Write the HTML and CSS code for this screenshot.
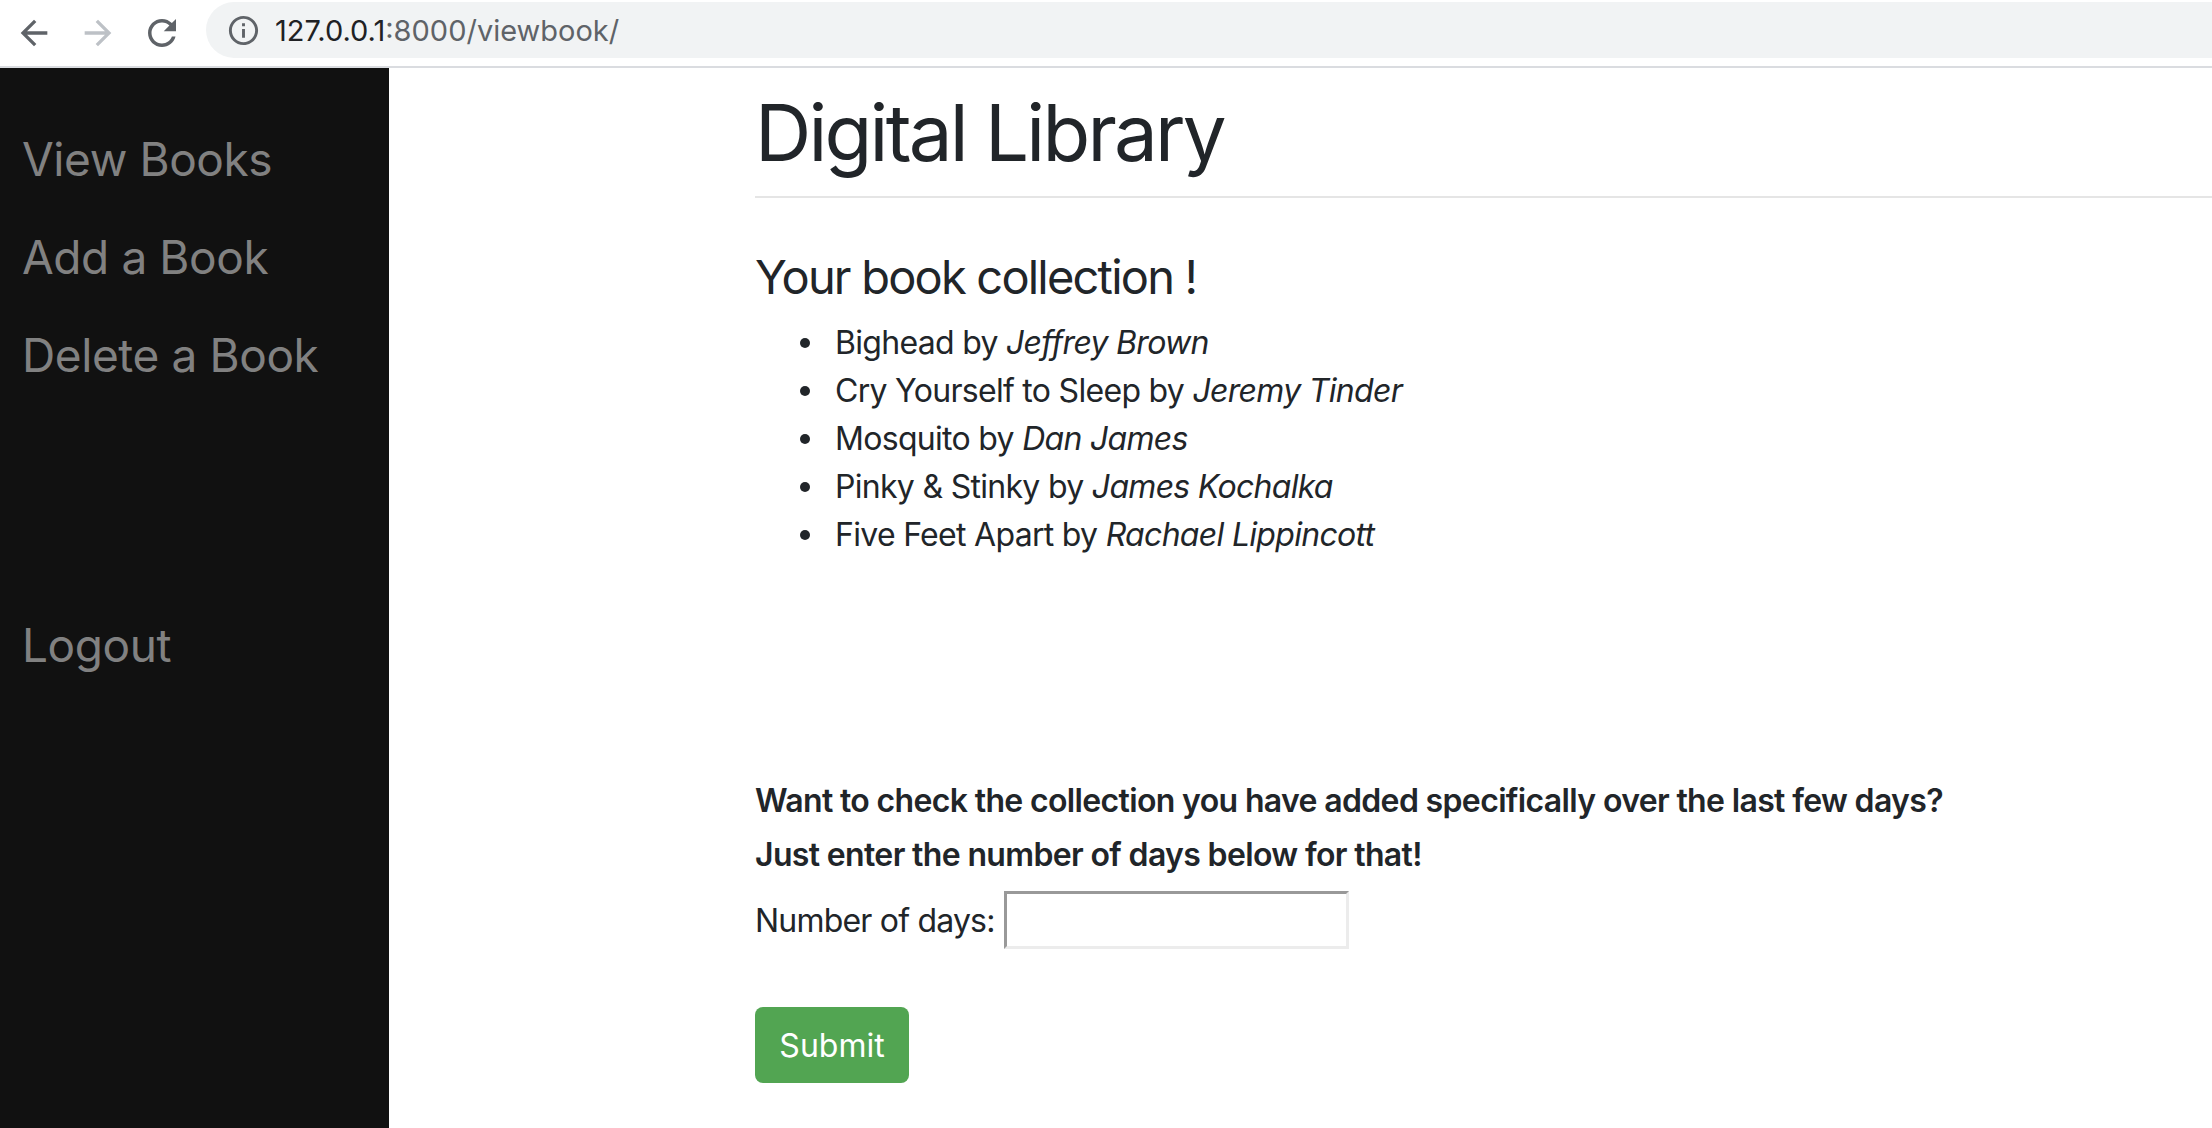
FILE: index.html
```html
<!DOCTYPE html>
<html lang="en">
<head>
<meta charset="utf-8">
<title>Digital Library</title>
<link rel="stylesheet" href="styles.css">
</head>
<body>
<div class="browser">
  <header class="toolbar">
    <svg class="nav-icon back" viewBox="0 0 24 24"><path d="M20 11H7.83l5.59-5.59L12 4l-8 8 8 8 1.41-1.41L7.83 13H20v-2z"/></svg>
    <svg class="nav-icon forward" viewBox="0 0 24 24"><path d="M4 11h12.17l-5.59-5.59L12 4l8 8-8 8-1.41-1.41L16.17 13H4v-2z"/></svg>
    <svg class="nav-icon reload" viewBox="0 0 24 24"><path d="M17.65 6.35C16.2 4.9 14.21 4 12 4c-4.42 0-7.99 3.58-7.99 8s3.57 8 7.990 8c3.73 0 6.84-2.55 7.73-6h-2.08c-.82 2.33-3.04 4-5.65 4-3.31 0-6-2.69-6-6s2.69-6 6-6c1.66 0 3.14.69 4.22 1.78L13 11h7V4l-2.35 2.35z"/></svg>
    <div class="omnibox">
      <svg class="info-icon" viewBox="0 0 24 24"><path d="M11 7h2v2h-2zm0 4h2v6h-2zm1-9C6.48 2 2 6.48 2 12s4.48 10 10 10 10-4.48 10-10S17.52 2 12 2zm0 18c-4.41 0-8-3.59-8-8s3.59-8 8-8 8 3.59 8 8-3.59 8-8 8z"/></svg>
      <span class="url"><span class="host">127.0.0.1</span>:8000/viewbook/</span>
    </div>
  </header>
  <div class="page">
    <nav class="sidenav">
      <a href="#" class="side-link">View Books</a>
      <a href="#" class="side-link">Add a Book</a>
      <a href="#" class="side-link">Delete a Book</a>
      <a href="#" class="side-link logout">Logout</a>
    </nav>
    <main class="main">
      <div class="page-header">
        <h1 class="title">Digital Library</h1>
      </div>
      <h4 class="subtitle">Your book collection !</h4>
      <ul class="books">
        <li>Bighead by <em>Jeffrey Brown</em></li>
        <li>Cry Yourself to Sleep by <em>Jeremy Tinder</em></li>
        <li>Mosquito by <em>Dan James</em></li>
        <li>Pinky &amp; Stinky by <em>James Kochalka</em></li>
        <li>Five Feet Apart by <em>Rachael Lippincott</em></li>
      </ul>
      <form class="days-form">
        <p class="prompt">Want to check the collection you have added specifically over the last few days?</p>
        <p class="prompt second">Just enter the number of days below for that!</p>
        <div class="field-row">
          <label class="field-label" for="days">Number of days:</label>
          <input class="field-input" id="days" type="text">
        </div>
        <button type="button" class="submit-btn">Submit</button>
      </form>
    </main>
  </div>
</div>
</body>
</html>
```

FILE: styles.css
```css
* { box-sizing: border-box; }
html, body { margin: 0; padding: 0; }
body {
  width: 2212px;
  height: 1128px;
  overflow: hidden;
  background: #fff;
  font-family: Inter, "Noto Sans", sans-serif;
  color: #212529;
}
.browser {
  display: flex;
  flex-direction: column;
  height: 1128px;
}
.toolbar {
  height: 68px;
  flex: 0 0 68px;
  display: flex;
  align-items: center;
  gap: 24px;
  padding-left: 14px;
  border-bottom: 2px solid #dadce0;
  background: #fff;
}
.nav-icon {
  width: 40px;
  height: 40px;
  flex: 0 0 40px;
  fill: #5f6368;
}
.nav-icon.forward { fill: #bdc1c6; }
.nav-icon.reload { width: 42px; height: 42px; flex-basis: 42px; margin-left: -1px; margin-right: -1px; }
.omnibox {
  flex: 1;
  align-self: flex-start;
  margin-top: 2px;
  height: 56px;
  background: #f1f3f4;
  border-radius: 28px 0 0 28px;
  display: flex;
  align-items: center;
  padding-left: 20px;
}
.info-icon {
  width: 35px;
  height: 35px;
  fill: #5f6368;
}
.url {
  margin-left: 14px;
  font-size: 29px;
  color: #5f6368;
}
.url .host { color: #202124; }

.page {
  flex: 1;
  display: flex;
}
.sidenav {
  width: 389px;
  flex: 0 0 389px;
  background: #111;
  padding-top: 42px;
  display: flex;
  flex-direction: column;
}
.side-link {
  display: block;
  padding: 14px 0 14px 22px;
  font-size: 46px;
  line-height: 70px;
  color: #818181;
  text-decoration: none;
  letter-spacing: -0.4px;
}
.side-link.logout { margin-top: 192px; }

.main {
  flex: 1;
  padding-left: 366px;
}
.page-header {
  margin-top: 17px;
  padding-bottom: 15px;
  border-bottom: 2px solid #e5e5e5;
}
.title {
  margin: 0;
  font-size: 78px;
  line-height: 96px;
  font-weight: 400;
  letter-spacing: -2.8px;
}
.subtitle {
  margin: 50px 0 13px;
  font-size: 47px;
  line-height: 58px;
  font-weight: 400;
  letter-spacing: -1.8px;
}
.books {
  margin: 0;
  padding-left: 80px;
  list-style: none;
  font-size: 32px;
  line-height: 48px;
  letter-spacing: -0.7px;
}
.books li::before {
  content: "";
  display: inline-block;
  width: 10px;
  height: 10px;
  border-radius: 50%;
  background: #212529;
  margin-left: -35px;
  margin-right: 25px;
  vertical-align: middle;
  position: relative;
  top: -2px;
}
.days-form {
  margin-top: 218px;
}
.prompt {
  margin: 0;
  font-size: 32px;
  line-height: 48px;
  font-weight: 600;
  letter-spacing: -0.65px;
}
.prompt.second { margin-top: 6px; }
.field-row {
  margin-top: 12px;
  display: flex;
  align-items: center;
  height: 58px;
  font-size: 32px;
  letter-spacing: -0.8px;
}
.field-label { margin-right: 9px; }
.field-input {
  width: 345px;
  height: 58px;
  border-width: 3px;
  border-style: solid;
  border-color: #999 #ececec #ececec #999;
  background: #fff;
  padding: 0 8px;
  font-size: 28px;
  font-family: inherit;
}
.submit-btn {
  margin-top: 58px;
  width: 154px;
  height: 76px;
  border: none;
  border-radius: 8px;
  background: #52a552;
  color: #fff;
  font-family: inherit;
  font-size: 32px;
  padding: 0;
}
```
